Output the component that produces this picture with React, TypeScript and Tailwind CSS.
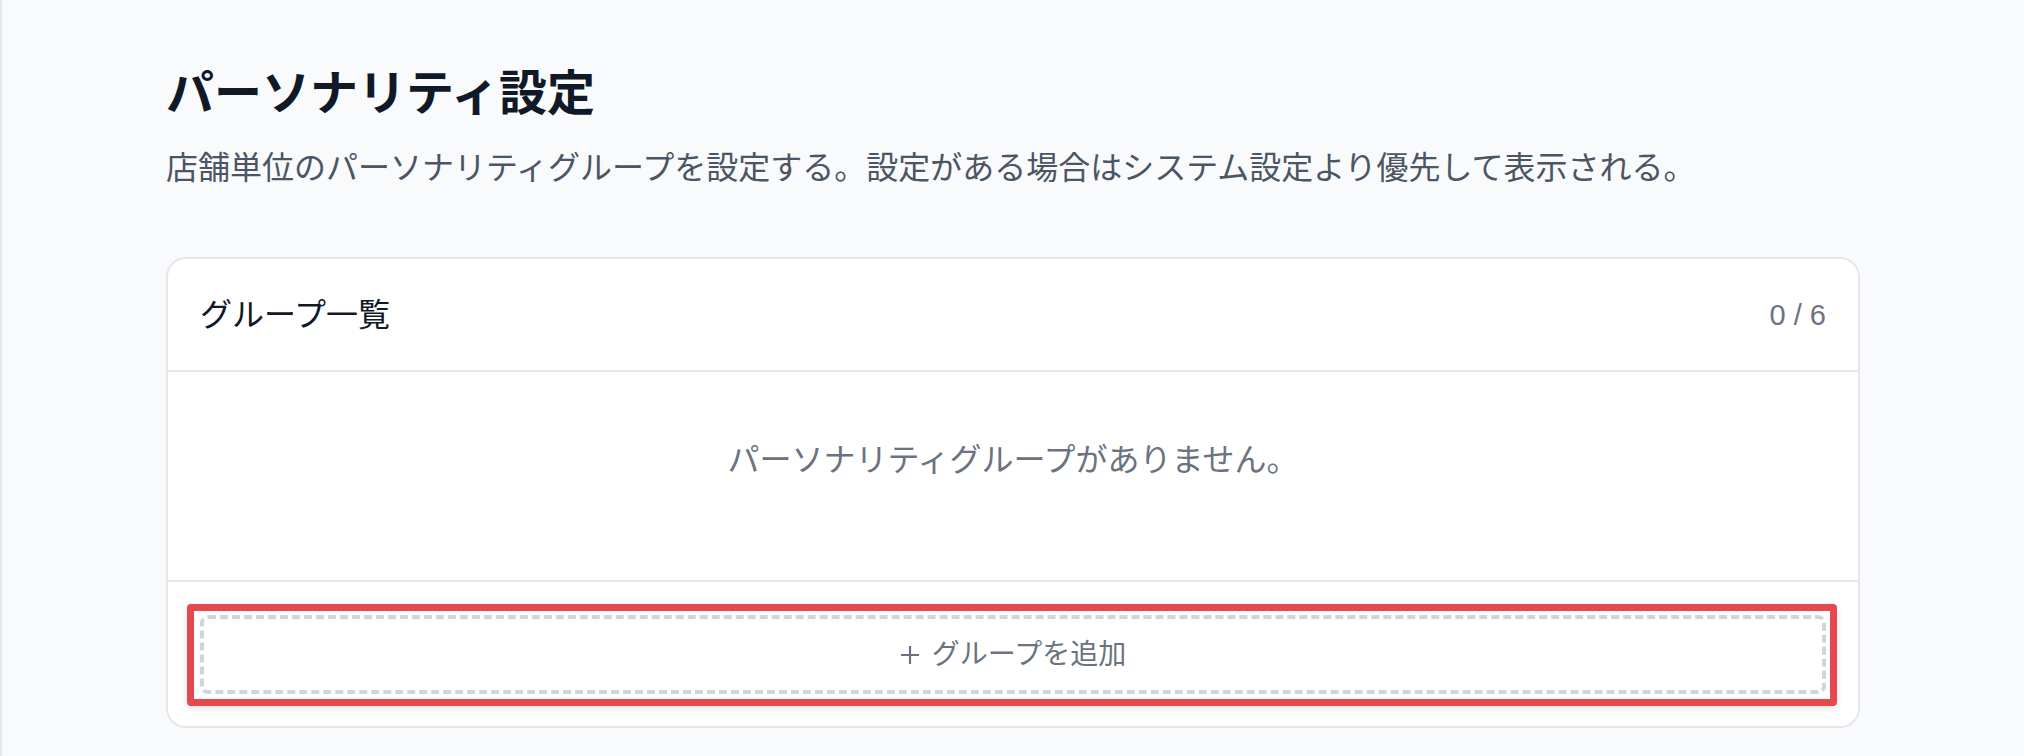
import React from "react";

export default function App() {
  return (
    <div className="min-h-screen bg-[#f9fafb] border-l-2 border-[#e5e7eb] px-[164px] pt-[62px] pb-[40px] font-['Liberation_Sans','Noto_Sans_CJK_JP',sans-serif]">
      <h1 className="text-[48px] leading-[64px] font-bold text-[#111827]">パーソナリティ設定</h1>
      <p className="mt-[18px] text-[32px] leading-[48px] text-[#4b5563]">
        店舗単位のパーソナリティグループを設定する。設定がある場合はシステム設定より優先して表示される。
      </p>

      <div className="mt-[65px] rounded-[20px] border-2 border-[#e5e7eb] bg-white">
        <div className="flex h-[113px] items-center justify-between border-b-2 border-[#e5e7eb] px-[32px]">
          <h2 className="text-[32px] leading-[48px] text-[#111827]">グループ一覧</h2>
          <span className="text-[29px] leading-[40px] text-[#6b7280]">0 / 6</span>
        </div>

        <div className="pt-[64px] pb-[96px] text-center">
          <p className="text-[32px] leading-[48px] text-[#6b7280]">パーソナリティグループがありません。</p>
        </div>

        <div className="border-t-2 border-[#e5e7eb] px-[32px] pt-[33px] pb-[32px]">
          <button className="relative flex h-[79px] w-full items-center justify-center rounded-[8px] border-[4px] border-dashed border-[#d1d5db] bg-white text-[28px] leading-[40px] text-[#6b7280]">
            <svg width="20" height="20" viewBox="0 0 20 20" className="mr-[12px]" aria-hidden="true">
              <path d="M10 1v18M1 10h18" stroke="#6b7280" strokeWidth="2.2" fill="none" />
            </svg>
            <span>グループを追加</span>
            <span className="pointer-events-none absolute -top-[15px] -bottom-[16px] -left-[17px] -right-[15px] rounded-[4px] border-[7px] border-[#e5484d] shadow-[0_2px_6px_rgba(0,0,0,0.12)]" />
          </button>
        </div>
      </div>
    </div>
  );
}
